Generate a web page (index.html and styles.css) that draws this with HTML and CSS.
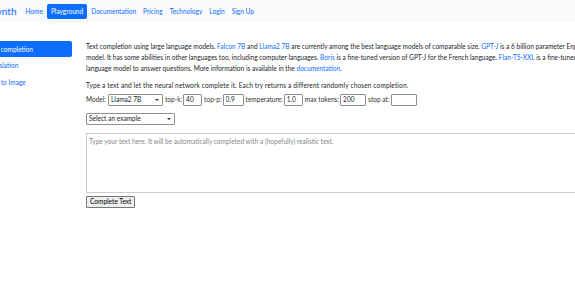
FILE: index.html
```html
<!DOCTYPE html>
<html lang="en">
<head>
  <meta charset="UTF-8" />
  <title>TextSynth Playground</title>
  <link rel="stylesheet" href="styles.css">
</head>
<body>
  <div class="page">
    <nav class="navbar">
      <span class="brand">TextSynth</span>
      <a class="nav-link" href="#">Home</a>
      <a class="nav-link active" href="#">Playground</a>
      <a class="nav-link" href="#">Documentation</a>
      <a class="nav-link" href="#">Pricing</a>
      <a class="nav-link" href="#">Technology</a>
      <a class="nav-link" href="#">Login</a>
      <a class="nav-link" href="#">Sign Up</a>
    </nav>

    <div class="layout">
      <div class="sidebar">
        <a class="side-link active" href="#">Text completion</a>
        <a class="side-link" href="#">Translation</a>
        <a class="side-link" href="#">Text to Image</a>
      </div>

      <div class="main">
        <p class="intro">Text completion using large language models. <a href="#">Falcon 7B</a> and <a href="#">Llama2 7B</a> are currently among the best language models of comparable size. <a href="#">GPT-J</a> is a 6 billion parameter English language<br>model. It has some abilities in other languages too, including computer languages. <a href="#">Boris</a> is a fine-tuned version of GPT-J for the French language. <a href="#">Flan-T5-XXL</a> is a fine-tuned<br>language model to answer questions. More information is available in the <a href="#">documentation</a>.</p>

        <p class="hint">Type a text and let the neural network complete it. Each try returns a different randomly chosen completion.</p>

        <div class="params">
          <label>Model:</label>
          <span class="select-wrap model-select"><select><option>Llama2 7B</option></select></span>
          <label>top-k:</label>
          <input class="num" type="text" value="40">
          <label>top-p:</label>
          <input class="num mid" type="text" value="0.9">
          <label>temperature:</label>
          <input class="num" type="text" value="1.0">
          <label>max tokens:</label>
          <input class="num wide" type="text" value="200">
          <label>stop at:</label>
          <input class="num wide" type="text" value="">
        </div>

        <div class="examples">
          <span class="select-wrap example-select"><select><option>Select an example</option></select></span>
        </div>

        <textarea class="prompt" placeholder="Type your text here. It will be automatically completed with a (hopefully) realistic text."></textarea>

        <button class="submit">Complete Text</button>
      </div>
    </div>
  </div>
</body>
</html>
```

FILE: styles.css
```css
* {
  margin: 0;
  padding: 0;
  box-sizing: border-box;
}

html,
body {
  width: 100%;
  height: 100%;
  overflow: hidden;
  background: #fff;
}

body {
  font-family: Lato, "Noto Sans", sans-serif;
  font-size: 6.55px;
  line-height: 11px;
  color: #212529;
}

a {
  color: #0d6efd;
  text-decoration: none;
}

.page {
  margin-left: -31px;
  width: 900px;
}

.navbar {
  display: flex;
  align-items: center;
  height: 22px;
  background: #f8f9fa;
  padding-left: 4px;
}

.brand {
  font-size: 10px;
  color: #0d6efd;
  margin-right: 6px;
}

.nav-link {
  padding: 2px 3px;
  margin-right: 1px;
  border-radius: 2px;
  line-height: 11px;
}

.nav-link.active {
  background: #0d6efd;
  color: #fff;
  padding: 2px 4px;
}

.layout {
  display: flex;
  padding-top: 19px;
}

.sidebar {
  width: 117px;
  flex: none;
  display: flex;
  flex-direction: column;
  gap: 0.5px;
  padding-left: 13px;
}

.side-link {
  display: block;
  padding: 2.5px 5px;
  line-height: 11px;
  border-radius: 2px;
  width: 90px;
}

.side-link.active {
  background: #0d6efd;
  color: #fff;
}

.main {
  flex: 1;
  padding-right: 20px;
}

.intro {
  width: 700px;
  margin-bottom: 6px;
}

.hint {
  margin-bottom: 1.5px;
  letter-spacing: 0.12px;
}

.params {
  display: flex;
  align-items: center;
  height: 14px;
}

.params label {
  margin-right: 1px;
  color: #333;
}

.params input,
.select-wrap select {
  font: inherit;
  height: 12px;
  border: 1px solid #8f8f8f;
  border-radius: 1px;
  background: #fff;
  color: #212529;
  line-height: 10px;
}

.select-wrap {
  position: relative;
  display: inline-block;
  height: 12px;
}

.select-wrap select {
  appearance: none;
  -webkit-appearance: none;
  width: 100%;
  padding: 0 10px 0 2px;
}

.select-wrap::after {
  content: "";
  position: absolute;
  right: 4px;
  top: 5px;
  border-left: 2px solid transparent;
  border-right: 2px solid transparent;
  border-top: 2.5px solid #333;
  pointer-events: none;
}

.model-select {
  width: 55px;
  margin: 0 2px 0 1px;
}

.num {
  width: 19px;
  padding: 0 2px;
  margin-right: 2px;
}

.num.mid {
  width: 21px;
}

.num.wide {
  width: 26px;
}

.examples {
  margin-top: 6px;
  height: 12px;
}

.example-select {
  width: 89px;
}

.prompt {
  display: block;
  margin-top: 8px;
  width: 560px;
  height: 60px;
  font: inherit;
  padding: 2px;
  border: 1px solid #ccc;
  resize: none;
}

.prompt::placeholder {
  color: #888;
}

.submit {
  display: block;
  margin-top: 3px;
  font: inherit;
  height: 12px;
  padding: 0 3px;
  border: 1px solid #767676;
  border-radius: 1px;
  background: #efefef;
  color: #000;
  line-height: 10px;
}
```
